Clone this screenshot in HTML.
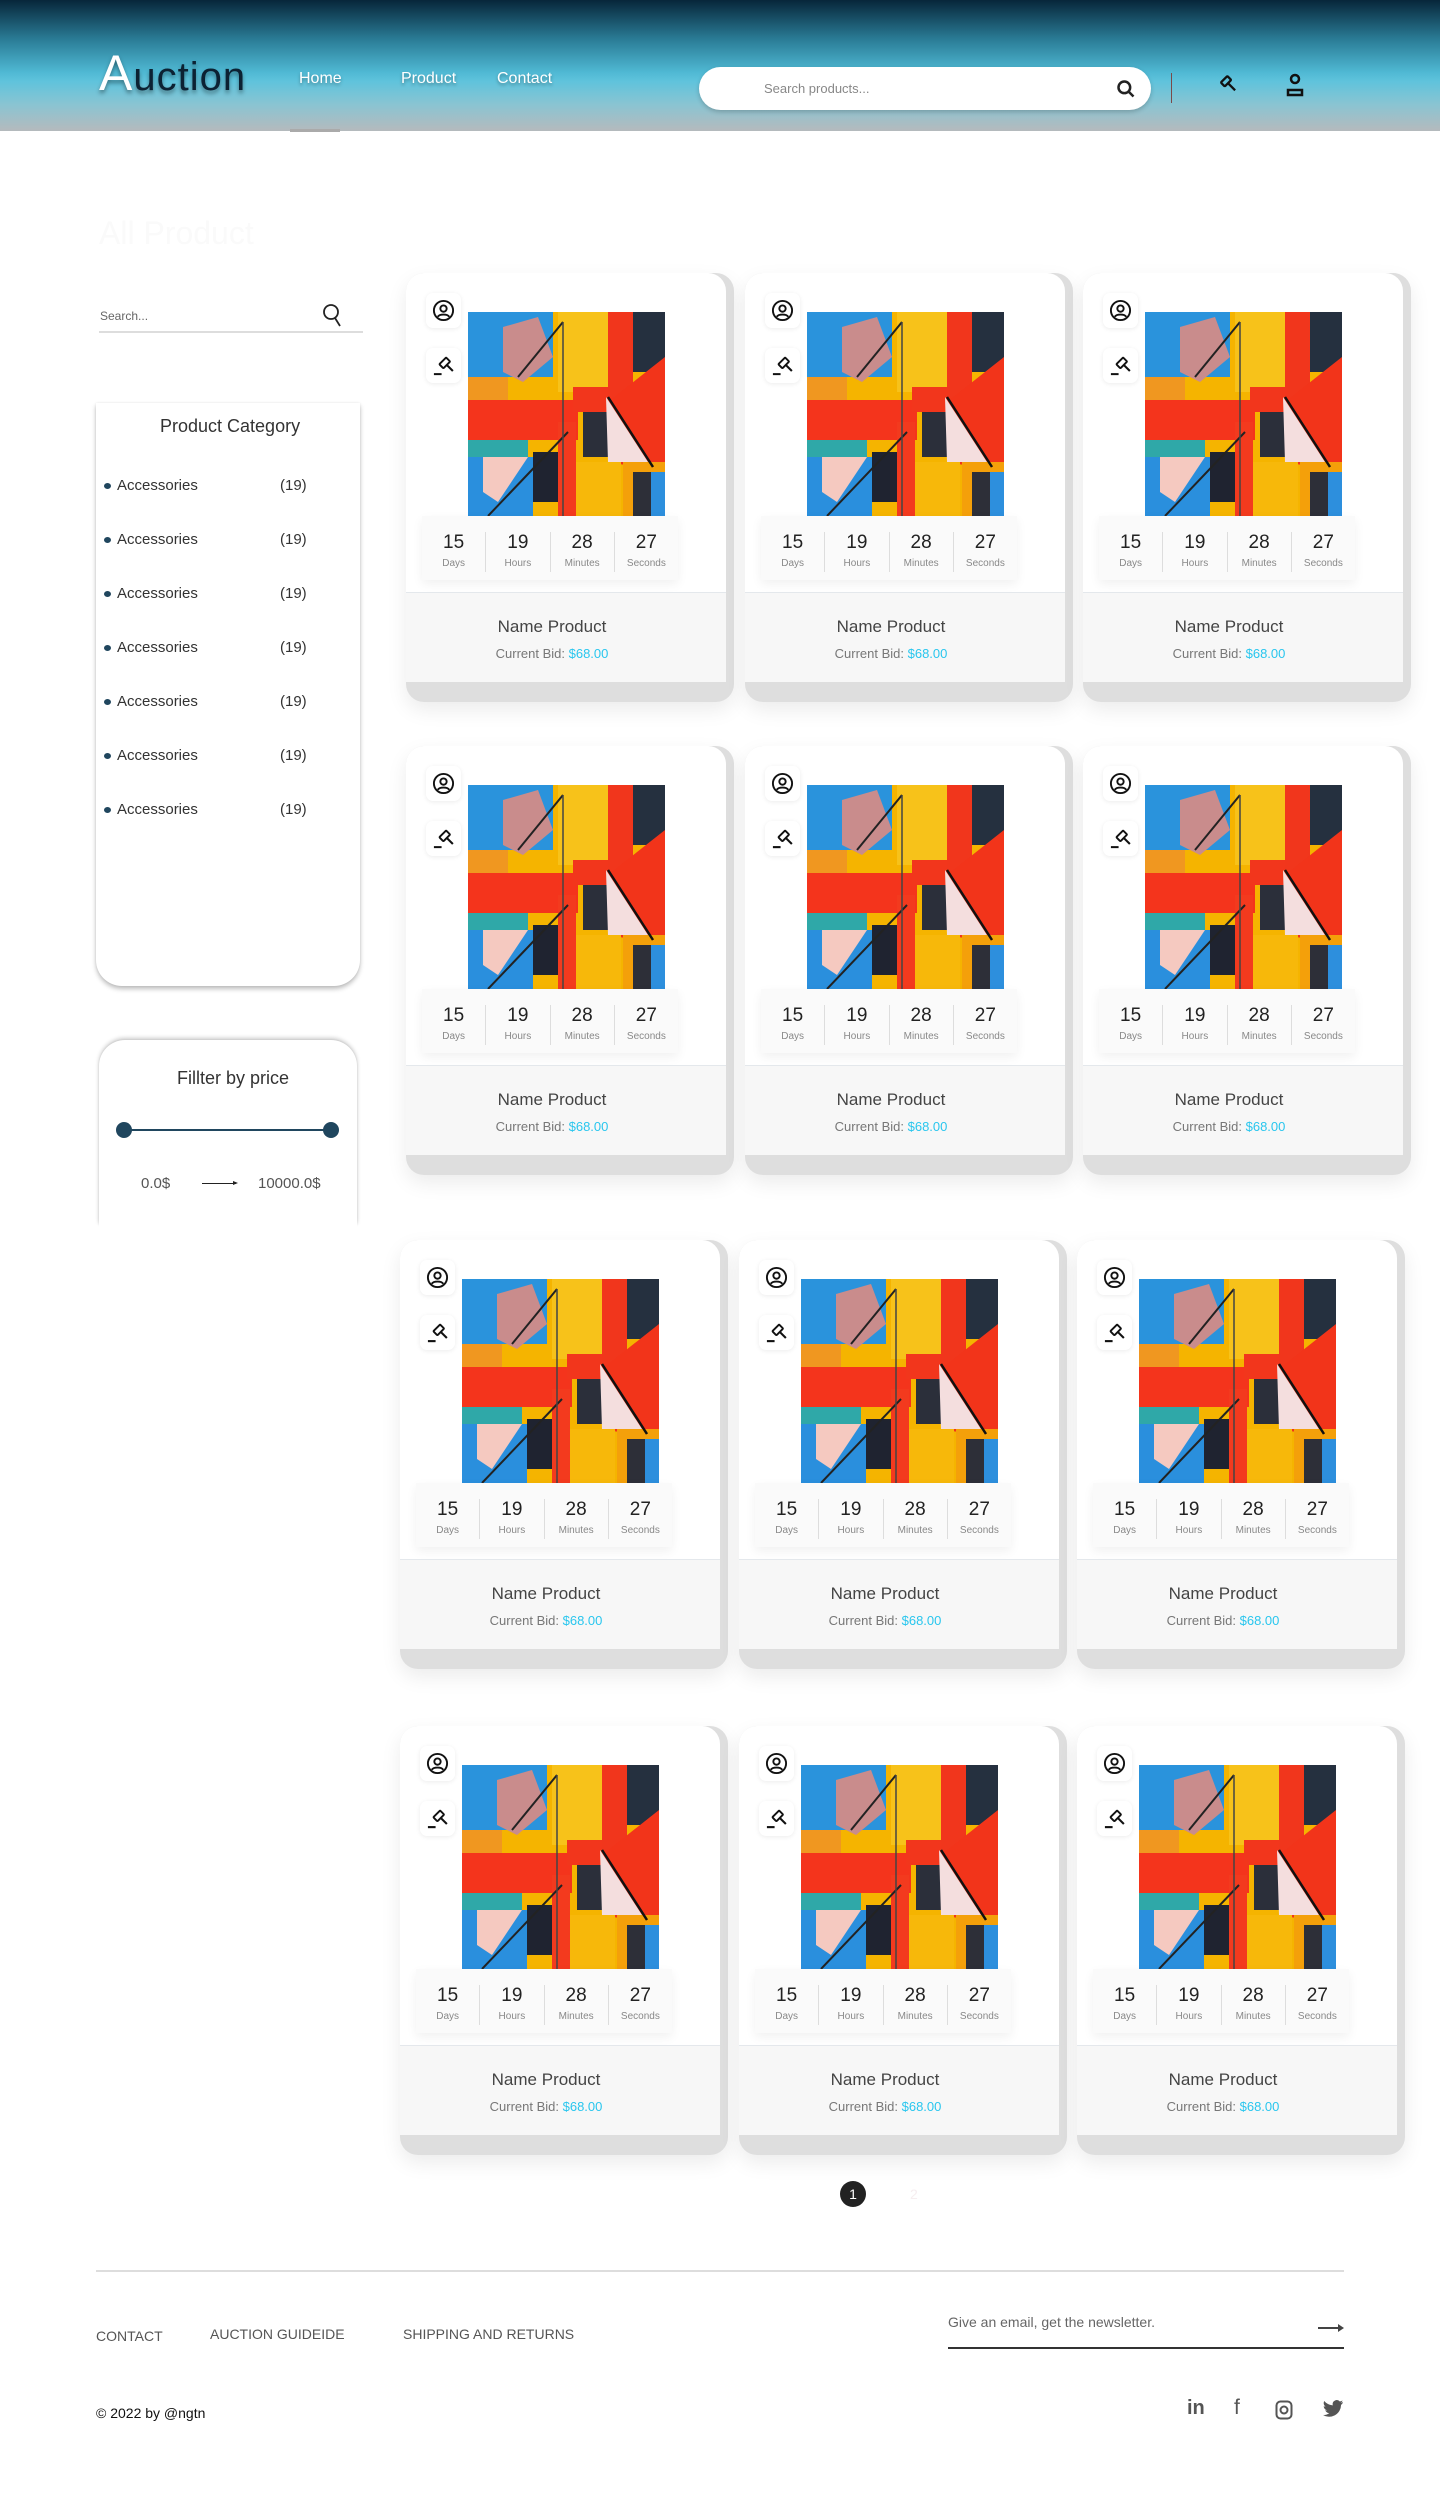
<!DOCTYPE html>
<html><head><meta charset="utf-8">
<style>
*{margin:0;padding:0;box-sizing:border-box}
body{width:1440px;height:2506px;position:relative;background:#fff;font-family:"Liberation Sans",sans-serif;overflow:hidden}
.abs{position:absolute}
header{position:absolute;left:0;top:0;width:1440px;height:131px;background:linear-gradient(180deg,#07263a 0%,#2a7c96 30%,#4fb8d3 55%,#5fc3dc 62%,#8ac4d2 80%,#b5babd 100%)}
.logo{position:absolute;left:99px;top:44px;font-size:50px;color:#fff;font-family:"Liberation Sans Narrow","Liberation Sans",sans-serif;text-shadow:0 3px 4px rgba(0,0,0,.4);letter-spacing:1px}
.logo span{color:#0c2233;font-size:40px}
.nav{position:absolute;top:70px;font-size:16px;color:#fff;text-shadow:0 2px 3px rgba(0,0,0,.35)}
.search{position:absolute;left:699px;top:67px;width:452px;height:43px;background:#fff;border-radius:22px;box-shadow:0 2px 5px rgba(0,0,0,.2)}
.search span{position:absolute;left:65px;top:14px;font-size:13px;color:#888}
.card{position:absolute;width:328px;height:429px}
.card .back{position:absolute;left:0;top:0;width:328px;height:429px;background:#dedede;border-radius:18px;box-shadow:0 8px 20px rgba(0,0,0,.08)}
.card .front{position:absolute;left:0;top:0;width:320px;height:409px;background:#fff;border-radius:18px 18px 0 0;overflow:hidden}
.card .bottom{position:absolute;left:0;top:319px;width:320px;height:90px;background:#f7f7f7;border-top:1px solid #e4e8ec}
.ib{position:absolute;left:20px;width:35px;height:35px;background:#fff;border-radius:7px;box-shadow:0 1px 5px rgba(0,0,0,.08)}
.ib svg{position:absolute;left:6px;top:6px}
.pic{position:absolute;left:62px;top:39px;width:197px;height:204px}
.cd{position:absolute;left:16px;top:243px;width:256px;height:64px;background:#fafafa;box-shadow:0 4px 10px rgba(0,0,0,.06);display:flex}
.cd div{flex:1;text-align:center;font-size:19px;color:#222;border-left:1px solid #ddd;margin:19px 0 5px;padding-top:0;position:relative;top:-3px}
.cd div:first-child{border-left:none}
.cd div small{display:block;font-size:10px;color:#888;margin-top:4px}
.nm{position:absolute;left:0;width:292px;text-align:center;top:344px;font-size:17px;color:#444}
.bid{position:absolute;left:0;width:292px;text-align:center;top:373px;font-size:13px;color:#777}
.bid b{font-weight:normal;color:#29c6ee}
.cat{position:absolute;left:104px;font-size:15px;color:#333}
.cat i{display:inline-block;width:7px;height:6px;border-radius:50%;background:#20465e;margin-right:6px;vertical-align:middle}
.cnt{position:absolute;left:280px;font-size:15px;color:#333}
.fl{position:absolute;top:2328px;font-size:14px;color:#555}
</style></head><body>
<svg width="0" height="0" style="position:absolute">
<defs>
<symbol id="art" viewBox="0 0 197 204">
<rect width="197" height="204" fill="#f5b400"/>
<rect x="0" y="0" width="85" height="65" fill="#2a93dc"/>
<polygon points="35,15 70,5 85,45 55,70 35,60" fill="#c98c8c"/>
<rect x="90" y="0" width="50" height="80" fill="#f7c21a"/>
<rect x="140" y="0" width="25" height="90" fill="#f1361c"/>
<rect x="165" y="0" width="32" height="60" fill="#25303f"/>
<polygon points="197,45 197,160 140,150 140,90" fill="#f2341a"/>
<rect x="0" y="65" width="40" height="25" fill="#f09720"/>
<rect x="0" y="88" width="110" height="40" fill="#f4341c"/>
<rect x="105" y="75" width="35" height="25" fill="#f2361c"/>
<rect x="115" y="100" width="25" height="45" fill="#2b2f3a"/>
<polygon points="138,85 180,150 140,150" fill="#f4dede"/>
<rect x="0" y="128" width="60" height="20" fill="#2fa8a8"/>
<rect x="0" y="145" width="65" height="59" fill="#2a8fdd"/>
<polygon points="15,145 60,145 30,190 15,180" fill="#f5c9c0"/>
<rect x="65" y="140" width="25" height="50" fill="#1f2330"/>
<rect x="90" y="110" width="18" height="94" fill="#f33a1e"/>
<rect x="108" y="150" width="45" height="54" fill="#f7b80a"/>
<rect x="155" y="150" width="42" height="54" fill="#f4a00a"/>
<rect x="165" y="160" width="18" height="44" fill="#2d2f38"/>
<rect x="183" y="160" width="14" height="44" fill="#2d8fdd"/>
<line x1="20" y1="204" x2="100" y2="120" stroke="#222" stroke-width="2"/>
<line x1="50" y1="65" x2="95" y2="10" stroke="#222" stroke-width="2"/>
<line x1="140" y1="85" x2="185" y2="155" stroke="#111" stroke-width="2.5"/>
<line x1="95" y1="10" x2="95" y2="204" stroke="#444" stroke-width="1.5"/>
</symbol>
<symbol id="usr" viewBox="0 0 24 24"><circle cx="12" cy="12" r="10" fill="none" stroke="#111" stroke-width="2"/><circle cx="12" cy="10" r="3.3" fill="none" stroke="#111" stroke-width="2"/><path d="M6 18.5c2-3 10-3 12 0" fill="none" stroke="#111" stroke-width="2"/></symbol>
<symbol id="gav" viewBox="0 0 24 24"><g transform="rotate(-45 14 10)"><rect x="9" y="6" width="10" height="6" rx="1" fill="none" stroke="#111" stroke-width="2"/><path d="M14 12v9" stroke="#111" stroke-width="2.2"/></g><path d="M2 21h8" stroke="#111" stroke-width="2.2"/></symbol>
</defs></svg>

<header>
<div class="logo">A<span>uction</span></div>
<div class="nav" style="left:299px">Home</div>
<div class="nav" style="left:401px">Product</div>
<div class="nav" style="left:497px">Contact</div>
<div class="abs" style="left:290px;top:129px;width:50px;height:3px;background:#aaa"></div>
<div class="search"><span>Search products...</span>
<svg class="abs" style="left:417px;top:12px" width="20" height="20" viewBox="0 0 24 24"><circle cx="10" cy="10" r="7" fill="none" stroke="#222" stroke-width="3"/><path d="M15 15l6 6" stroke="#222" stroke-width="3"/></svg></div>
<div class="abs" style="left:1171px;top:73px;width:1px;height:30px;background:#7a4a4a"></div>
<svg class="abs" style="left:1217px;top:74px" width="22" height="22" viewBox="0 0 24 24"><g transform="rotate(-45 12 10)"><rect x="7" y="4" width="10" height="6" rx="1" fill="none" stroke="#111" stroke-width="2.5"/><path d="M12 10v11" stroke="#111" stroke-width="2.5"/></g></svg>
<svg class="abs" style="left:1284px;top:73px" width="22" height="26" viewBox="0 0 22 26"><circle cx="11" cy="6" r="4" fill="none" stroke="#111" stroke-width="2.5"/><path d="M4 22v-5h14v5z" fill="none" stroke="#111" stroke-width="2.5"/></svg>
</header>

<div class="abs" style="left:99px;top:215px;font-size:32px;color:#fafafa">All Product</div>

<div class="abs" style="left:100px;top:309px;font-size:12px;color:#666">Search...</div>
<svg class="abs" style="left:322px;top:303px" width="22" height="26" viewBox="0 0 22 26"><circle cx="9" cy="9" r="7" fill="none" stroke="#222" stroke-width="1.8"/><path d="M13 15l5 8" stroke="#222" stroke-width="1.8"/></svg>
<div class="abs" style="left:99px;top:331px;width:264px;height:2px;background:#ddd"></div>

<div class="abs" style="left:96px;top:403px;width:264px;height:583px;border-radius:0 0 26px 26px;box-shadow:0 3px 5px rgba(0,0,0,.25),0 0 2px rgba(0,0,0,.08)"></div>
<div class="abs" style="left:160px;top:416px;font-size:18px;color:#333">Product Category</div>
<div class="cat" style="top:477px"><i></i>Accessories</div><div class="cnt" style="top:477px">(19)</div>
<div class="cat" style="top:531px"><i></i>Accessories</div><div class="cnt" style="top:531px">(19)</div>
<div class="cat" style="top:585px"><i></i>Accessories</div><div class="cnt" style="top:585px">(19)</div>
<div class="cat" style="top:639px"><i></i>Accessories</div><div class="cnt" style="top:639px">(19)</div>
<div class="cat" style="top:693px"><i></i>Accessories</div><div class="cnt" style="top:693px">(19)</div>
<div class="cat" style="top:747px"><i></i>Accessories</div><div class="cnt" style="top:747px">(19)</div>
<div class="cat" style="top:801px"><i></i>Accessories</div><div class="cnt" style="top:801px">(19)</div>

<div class="abs" style="left:99px;top:1040px;width:258px;height:185px;border-radius:26px 26px 0 0;box-shadow:0 -2px 4px rgba(0,0,0,.2),0 0 2px rgba(0,0,0,.1)"></div>
<div class="abs" style="left:99px;top:1180px;width:258px;height:50px;background:#fff"></div>
<div class="abs" style="left:177px;top:1068px;font-size:18px;color:#333">Fillter by price</div>
<div class="abs" style="left:125px;top:1129px;width:206px;height:2px;background:#20465e"></div>
<div class="abs" style="left:116px;top:1122px;width:16px;height:16px;border-radius:50%;background:#20465e"></div>
<div class="abs" style="left:323px;top:1122px;width:16px;height:16px;border-radius:50%;background:#20465e"></div>
<div class="abs" style="left:141px;top:1175px;font-size:15px;color:#555">0.0$</div>
<div class="abs" style="left:202px;top:1183px;width:34px;height:1px;background:#222"></div>
<div class="abs" style="left:233px;top:1181px;border-left:5px solid #222;border-top:2.5px solid transparent;border-bottom:2.5px solid transparent"></div>
<div class="abs" style="left:258px;top:1175px;font-size:15px;color:#555">10000.0$</div>

<!-- CARDS -->
<div class="card" style="left:406px;top:273px"><div class="back"></div><div class="front"><div class="ib" style="top:20px"><svg width="23" height="23"><use href="#usr"/></svg></div><div class="ib" style="top:75px"><svg width="23" height="23"><use href="#gav"/></svg></div><svg class="pic"><use href="#art"/></svg><div class="cd"><div>15<small>Days</small></div><div>19<small>Hours</small></div><div>28<small>Minutes</small></div><div>27<small>Seconds</small></div></div><div class="bottom"></div><div class="nm">Name Product</div><div class="bid">Current Bid: <b>$68.00</b></div></div></div>
<div class="card" style="left:745px;top:273px"><div class="back"></div><div class="front"><div class="ib" style="top:20px"><svg width="23" height="23"><use href="#usr"/></svg></div><div class="ib" style="top:75px"><svg width="23" height="23"><use href="#gav"/></svg></div><svg class="pic"><use href="#art"/></svg><div class="cd"><div>15<small>Days</small></div><div>19<small>Hours</small></div><div>28<small>Minutes</small></div><div>27<small>Seconds</small></div></div><div class="bottom"></div><div class="nm">Name Product</div><div class="bid">Current Bid: <b>$68.00</b></div></div></div>
<div class="card" style="left:1083px;top:273px"><div class="back"></div><div class="front"><div class="ib" style="top:20px"><svg width="23" height="23"><use href="#usr"/></svg></div><div class="ib" style="top:75px"><svg width="23" height="23"><use href="#gav"/></svg></div><svg class="pic"><use href="#art"/></svg><div class="cd"><div>15<small>Days</small></div><div>19<small>Hours</small></div><div>28<small>Minutes</small></div><div>27<small>Seconds</small></div></div><div class="bottom"></div><div class="nm">Name Product</div><div class="bid">Current Bid: <b>$68.00</b></div></div></div>

<div class="card" style="left:406px;top:746px"><div class="back"></div><div class="front"><div class="ib" style="top:20px"><svg width="23" height="23"><use href="#usr"/></svg></div><div class="ib" style="top:75px"><svg width="23" height="23"><use href="#gav"/></svg></div><svg class="pic"><use href="#art"/></svg><div class="cd"><div>15<small>Days</small></div><div>19<small>Hours</small></div><div>28<small>Minutes</small></div><div>27<small>Seconds</small></div></div><div class="bottom"></div><div class="nm">Name Product</div><div class="bid">Current Bid: <b>$68.00</b></div></div></div>
<div class="card" style="left:745px;top:746px"><div class="back"></div><div class="front"><div class="ib" style="top:20px"><svg width="23" height="23"><use href="#usr"/></svg></div><div class="ib" style="top:75px"><svg width="23" height="23"><use href="#gav"/></svg></div><svg class="pic"><use href="#art"/></svg><div class="cd"><div>15<small>Days</small></div><div>19<small>Hours</small></div><div>28<small>Minutes</small></div><div>27<small>Seconds</small></div></div><div class="bottom"></div><div class="nm">Name Product</div><div class="bid">Current Bid: <b>$68.00</b></div></div></div>
<div class="card" style="left:1083px;top:746px"><div class="back"></div><div class="front"><div class="ib" style="top:20px"><svg width="23" height="23"><use href="#usr"/></svg></div><div class="ib" style="top:75px"><svg width="23" height="23"><use href="#gav"/></svg></div><svg class="pic"><use href="#art"/></svg><div class="cd"><div>15<small>Days</small></div><div>19<small>Hours</small></div><div>28<small>Minutes</small></div><div>27<small>Seconds</small></div></div><div class="bottom"></div><div class="nm">Name Product</div><div class="bid">Current Bid: <b>$68.00</b></div></div></div>

<div class="card" style="left:400px;top:1240px"><div class="back"></div><div class="front"><div class="ib" style="top:20px"><svg width="23" height="23"><use href="#usr"/></svg></div><div class="ib" style="top:75px"><svg width="23" height="23"><use href="#gav"/></svg></div><svg class="pic"><use href="#art"/></svg><div class="cd"><div>15<small>Days</small></div><div>19<small>Hours</small></div><div>28<small>Minutes</small></div><div>27<small>Seconds</small></div></div><div class="bottom"></div><div class="nm">Name Product</div><div class="bid">Current Bid: <b>$68.00</b></div></div></div>
<div class="card" style="left:739px;top:1240px"><div class="back"></div><div class="front"><div class="ib" style="top:20px"><svg width="23" height="23"><use href="#usr"/></svg></div><div class="ib" style="top:75px"><svg width="23" height="23"><use href="#gav"/></svg></div><svg class="pic"><use href="#art"/></svg><div class="cd"><div>15<small>Days</small></div><div>19<small>Hours</small></div><div>28<small>Minutes</small></div><div>27<small>Seconds</small></div></div><div class="bottom"></div><div class="nm">Name Product</div><div class="bid">Current Bid: <b>$68.00</b></div></div></div>
<div class="card" style="left:1077px;top:1240px"><div class="back"></div><div class="front"><div class="ib" style="top:20px"><svg width="23" height="23"><use href="#usr"/></svg></div><div class="ib" style="top:75px"><svg width="23" height="23"><use href="#gav"/></svg></div><svg class="pic"><use href="#art"/></svg><div class="cd"><div>15<small>Days</small></div><div>19<small>Hours</small></div><div>28<small>Minutes</small></div><div>27<small>Seconds</small></div></div><div class="bottom"></div><div class="nm">Name Product</div><div class="bid">Current Bid: <b>$68.00</b></div></div></div>

<div class="card" style="left:400px;top:1726px"><div class="back"></div><div class="front"><div class="ib" style="top:20px"><svg width="23" height="23"><use href="#usr"/></svg></div><div class="ib" style="top:75px"><svg width="23" height="23"><use href="#gav"/></svg></div><svg class="pic"><use href="#art"/></svg><div class="cd"><div>15<small>Days</small></div><div>19<small>Hours</small></div><div>28<small>Minutes</small></div><div>27<small>Seconds</small></div></div><div class="bottom"></div><div class="nm">Name Product</div><div class="bid">Current Bid: <b>$68.00</b></div></div></div>
<div class="card" style="left:739px;top:1726px"><div class="back"></div><div class="front"><div class="ib" style="top:20px"><svg width="23" height="23"><use href="#usr"/></svg></div><div class="ib" style="top:75px"><svg width="23" height="23"><use href="#gav"/></svg></div><svg class="pic"><use href="#art"/></svg><div class="cd"><div>15<small>Days</small></div><div>19<small>Hours</small></div><div>28<small>Minutes</small></div><div>27<small>Seconds</small></div></div><div class="bottom"></div><div class="nm">Name Product</div><div class="bid">Current Bid: <b>$68.00</b></div></div></div>
<div class="card" style="left:1077px;top:1726px"><div class="back"></div><div class="front"><div class="ib" style="top:20px"><svg width="23" height="23"><use href="#usr"/></svg></div><div class="ib" style="top:75px"><svg width="23" height="23"><use href="#gav"/></svg></div><svg class="pic"><use href="#art"/></svg><div class="cd"><div>15<small>Days</small></div><div>19<small>Hours</small></div><div>28<small>Minutes</small></div><div>27<small>Seconds</small></div></div><div class="bottom"></div><div class="nm">Name Product</div><div class="bid">Current Bid: <b>$68.00</b></div></div></div>

<!-- pagination -->
<div class="abs" style="left:840px;top:2181px;width:26px;height:26px;border-radius:50%;background:#222;color:#fff;font-size:14px;text-align:center;line-height:26px">1</div>
<div class="abs" style="left:910px;top:2186px;font-size:14px;color:#f6eef0">2</div>

<!-- footer -->
<div class="abs" style="left:96px;top:2270px;width:1248px;height:2px;background:#ddd"></div>
<div class="fl" style="left:96px">CONTACT</div>
<div class="fl" style="left:210px;top:2326px">AUCTION GUIDEIDE</div>
<div class="fl" style="left:403px;top:2326px">SHIPPING AND RETURNS</div>
<div class="abs" style="left:948px;top:2314px;font-size:14px;color:#666">Give an email, get the newsletter.</div>
<div class="abs" style="left:1318px;top:2327px;width:22px;height:2px;background:#444"></div>
<div class="abs" style="left:1338px;top:2324px;border-left:6px solid #444;border-top:4px solid transparent;border-bottom:4px solid transparent"></div>
<div class="abs" style="left:948px;top:2347px;width:396px;height:2px;background:#333"></div>
<div class="abs" style="left:96px;top:2405px;font-size:14px;color:#111">© 2022 by @ngtn</div>
<div class="abs" style="left:1187px;top:2397px;font-size:20px;font-weight:bold;color:#555">in</div>
<div class="abs" style="left:1234px;top:2396px;font-size:21px;color:#555">f</div>
<svg class="abs" style="left:1275px;top:2400px" width="18" height="20" viewBox="0 0 18 20"><rect x="1.5" y="1.5" width="15" height="17" rx="4" fill="none" stroke="#555" stroke-width="2"/><circle cx="9" cy="10" r="3.5" fill="none" stroke="#555" stroke-width="2"/></svg>
<svg class="abs" style="left:1322px;top:2399px" width="22" height="20" viewBox="0 0 24 20"><path d="M23 2.5c-.8.4-1.7.6-2.6.7.9-.6 1.6-1.4 2-2.5-.9.5-1.9.9-2.9 1.1A4.5 4.5 0 0 0 11.8 6C8 5.8 4.7 4 2.5 1.3 1.2 3.4 1.9 6.1 3.9 7.4c-.7 0-1.4-.2-2-.6 0 2.2 1.6 4.1 3.7 4.5-.7.2-1.4.2-2 .1.6 1.8 2.3 3.1 4.3 3.1A9.1 9.1 0 0 1 1 16.4 12.9 12.9 0 0 0 20.8 5.5c.9-.7 1.7-1.5 2.2-3z" fill="#555"/></svg>
</body></html>
